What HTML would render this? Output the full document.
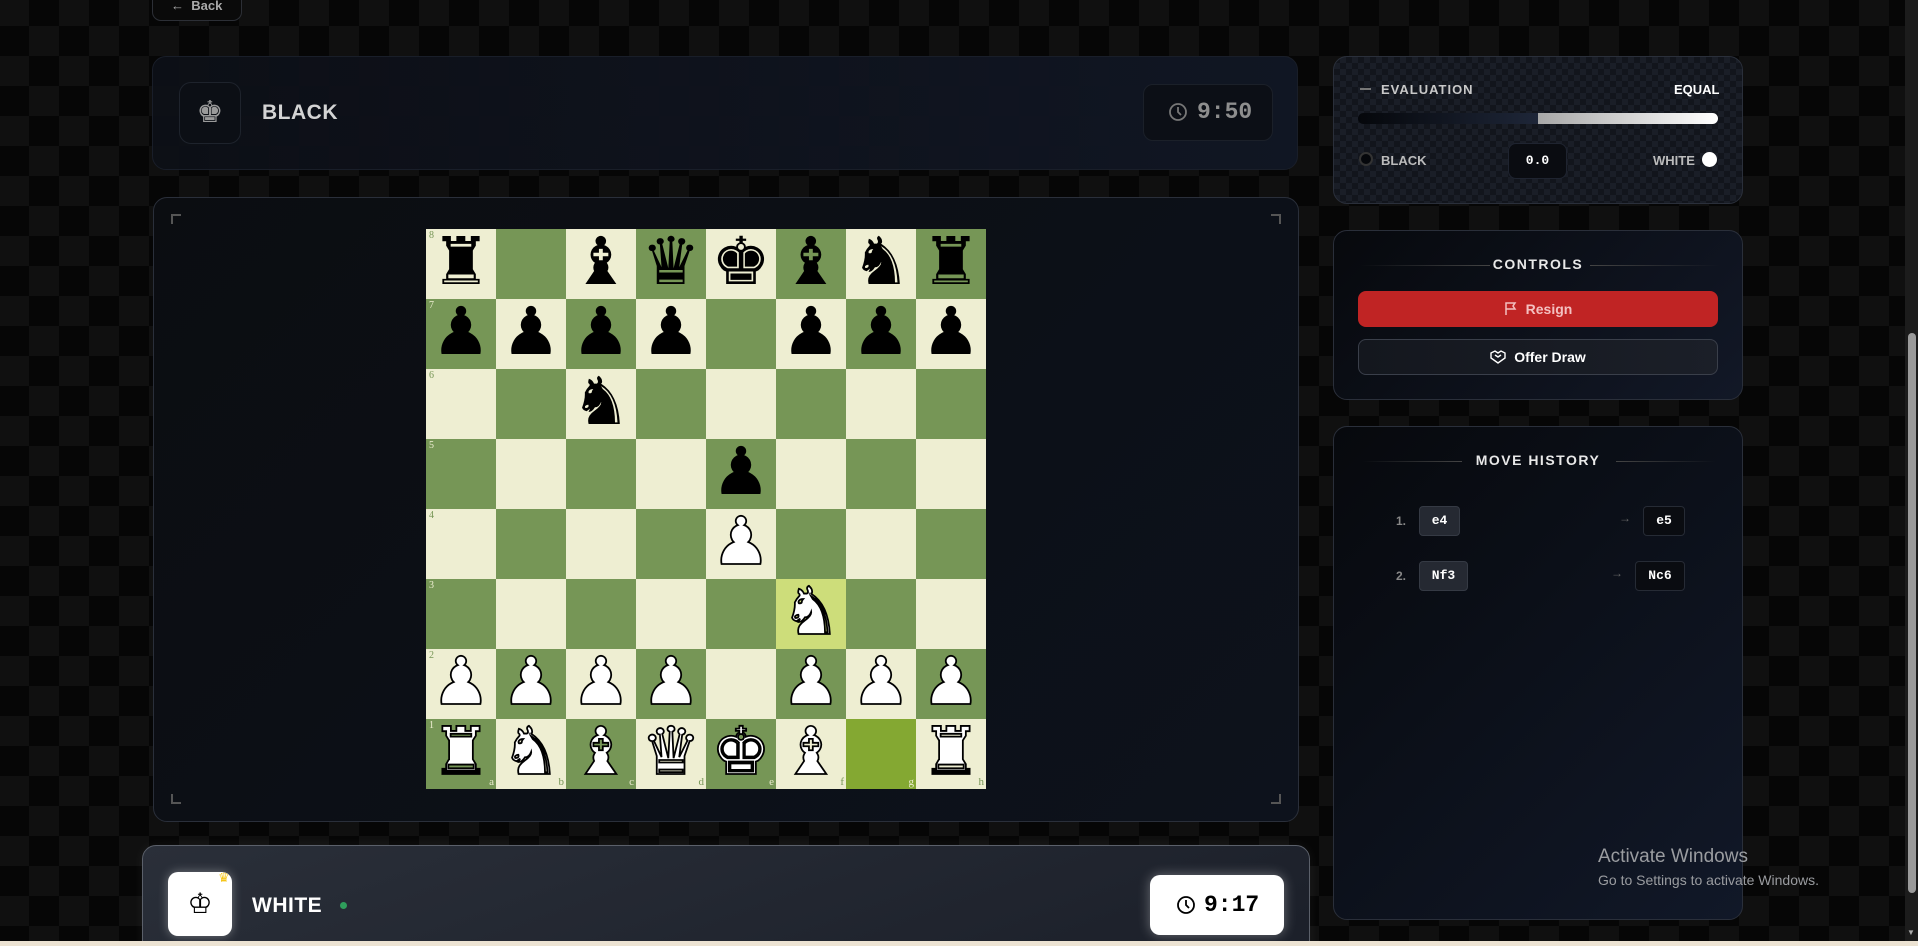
<!DOCTYPE html>
<html><head><meta charset="utf-8"><style>
*{box-sizing:border-box;margin:0;padding:0}
html,body{width:1918px;height:946px;overflow:hidden}
body{position:relative;font-family:"Liberation Sans","DejaVu Sans",sans-serif;color:#e5e7eb;
background-color:#060606;
background-image:linear-gradient(45deg,#101010 25%,transparent 25%,transparent 75%,#101010 75%),linear-gradient(45deg,#101010 25%,transparent 25%,transparent 75%,#101010 75%);
background-size:60px 60px;background-position:29px -4px,59px 26px}
.abs{position:absolute}
.card{position:absolute;border-radius:14px}
.sq{position:absolute;width:70px;height:70px;font-family:"DejaVu Sans",sans-serif;font-size:66px;line-height:66px;text-align:center;overflow:hidden}
.l{background:#eeeed2}.d{background:#769656}
.b{color:#000}
.w{color:#fff;-webkit-text-stroke:1.8px #000}
.rk{position:absolute;left:3px;top:1px;font-size:10px;line-height:12px;font-family:"Liberation Serif",serif;-webkit-text-stroke:0}
.fl{position:absolute;right:2px;bottom:1px;font-size:11px;line-height:12px;font-family:"Liberation Serif",serif;-webkit-text-stroke:0}
.l .rk,.l .fl{color:#769656}.d .rk,.d .fl{color:#eeeed2}
.title{position:absolute;left:0;width:100%;text-align:center;font-weight:bold;font-size:14px;letter-spacing:1.5px;color:#e8e8e8}
.mv{position:absolute;height:30px;border-radius:4px;font-family:"Liberation Mono",monospace;font-weight:bold;font-size:13px;line-height:28px;text-align:center;color:#fff}
</style></head><body>

<div class="abs" style="left:152px;top:-12px;width:90px;height:33px;border:1px solid #2c2f36;border-radius:9px;background:#0a0a0a;font-size:13px;font-weight:bold;color:#aaa;padding:9px 0 0 18px">← &nbsp;Back</div>

<div class="card" style="left:152px;top:56px;width:1146px;height:114px;background:linear-gradient(90deg,#0d1017,#111724);border:1px solid #1a1f2a;opacity:.97"></div>
<div class="abs" style="left:179px;top:82px;width:62px;height:62px;border:1px solid #1e232c;border-radius:12px;background:#0c0f15;text-align:center;font-family:'DejaVu Sans';font-size:30px;line-height:60px;color:#9a9a9a">♚</div>
<div class="abs" style="left:262px;top:101px;font-size:21px;font-weight:bold;color:#d4d4d4;letter-spacing:.5px">BLACK</div>
<div class="abs" style="left:1143px;top:84px;width:130px;height:57px;border:1px solid #1b2029;border-radius:10px;background:#0c0f16"></div>
<svg class="abs" style="left:1168px;top:102px" width="20" height="20" viewBox="0 0 20 20"><circle cx="10" cy="10" r="8" fill="none" stroke="#777" stroke-width="1.8"/><path d="M10 5v5l3 3" fill="none" stroke="#777" stroke-width="1.8"/></svg>
<div class="abs" style="left:1197px;top:99px;font-family:'Liberation Mono',monospace;font-weight:bold;font-size:23px;color:#8e8e8e">9:50</div>

<div class="card" style="left:153px;top:197px;width:1146px;height:625px;background:linear-gradient(135deg,#0b0d11,#0d121c);border:1px solid #2a2f3a"></div>
<div class="abs" style="left:171px;top:214px;width:10px;height:10px;border-left:2px solid #555;border-top:2px solid #555"></div>
<div class="abs" style="left:1271px;top:214px;width:10px;height:10px;border-right:2px solid #555;border-top:2px solid #555"></div>
<div class="abs" style="left:171px;top:794px;width:10px;height:10px;border-left:2px solid #555;border-bottom:2px solid #555"></div>
<div class="abs" style="left:1271px;top:794px;width:10px;height:10px;border-right:2px solid #555;border-bottom:2px solid #555"></div>

<div class="abs" style="left:426px;top:229px;width:560px;height:560px">
<div class="sq l b" style="left:0;top:0"><span class="rk">8</span>♜</div>
<div class="sq d" style="left:70px;top:0"></div>
<div class="sq l b" style="left:140px;top:0">♝</div>
<div class="sq d b" style="left:210px;top:0">♛</div>
<div class="sq l b" style="left:280px;top:0">♚</div>
<div class="sq d b" style="left:350px;top:0">♝</div>
<div class="sq l b" style="left:420px;top:0">♞</div>
<div class="sq d b" style="left:490px;top:0">♜</div>
<div class="sq d b" style="left:0;top:70px"><span class="rk">7</span>♟</div>
<div class="sq l b" style="left:70px;top:70px">♟</div>
<div class="sq d b" style="left:140px;top:70px">♟</div>
<div class="sq l b" style="left:210px;top:70px">♟</div>
<div class="sq d" style="left:280px;top:70px"></div>
<div class="sq l b" style="left:350px;top:70px">♟</div>
<div class="sq d b" style="left:420px;top:70px">♟</div>
<div class="sq l b" style="left:490px;top:70px">♟</div>
<div class="sq l" style="left:0;top:140px"><span class="rk">6</span></div>
<div class="sq d" style="left:70px;top:140px"></div>
<div class="sq l b" style="left:140px;top:140px">♞</div>
<div class="sq d" style="left:210px;top:140px"></div>
<div class="sq l" style="left:280px;top:140px"></div>
<div class="sq d" style="left:350px;top:140px"></div>
<div class="sq l" style="left:420px;top:140px"></div>
<div class="sq d" style="left:490px;top:140px"></div>
<div class="sq d" style="left:0;top:210px"><span class="rk">5</span></div>
<div class="sq l" style="left:70px;top:210px"></div>
<div class="sq d" style="left:140px;top:210px"></div>
<div class="sq l" style="left:210px;top:210px"></div>
<div class="sq d b" style="left:280px;top:210px">♟</div>
<div class="sq l" style="left:350px;top:210px"></div>
<div class="sq d" style="left:420px;top:210px"></div>
<div class="sq l" style="left:490px;top:210px"></div>
<div class="sq l" style="left:0;top:280px"><span class="rk">4</span></div>
<div class="sq d" style="left:70px;top:280px"></div>
<div class="sq l" style="left:140px;top:280px"></div>
<div class="sq d" style="left:210px;top:280px"></div>
<div class="sq l w" style="left:280px;top:280px">♟</div>
<div class="sq d" style="left:350px;top:280px"></div>
<div class="sq l" style="left:420px;top:280px"></div>
<div class="sq d" style="left:490px;top:280px"></div>
<div class="sq d" style="left:0;top:350px"><span class="rk">3</span></div>
<div class="sq l" style="left:70px;top:350px"></div>
<div class="sq d" style="left:140px;top:350px"></div>
<div class="sq l" style="left:210px;top:350px"></div>
<div class="sq d" style="left:280px;top:350px"></div>
<div class="sq w" style="left:350px;top:350px;background:#cddd7a">♞</div>
<div class="sq d" style="left:420px;top:350px"></div>
<div class="sq l" style="left:490px;top:350px"></div>
<div class="sq l w" style="left:0;top:420px"><span class="rk">2</span>♟</div>
<div class="sq d w" style="left:70px;top:420px">♟</div>
<div class="sq l w" style="left:140px;top:420px">♟</div>
<div class="sq d w" style="left:210px;top:420px">♟</div>
<div class="sq l" style="left:280px;top:420px"></div>
<div class="sq d w" style="left:350px;top:420px">♟</div>
<div class="sq l w" style="left:420px;top:420px">♟</div>
<div class="sq d w" style="left:490px;top:420px">♟</div>
<div class="sq d w" style="left:0;top:490px"><span class="rk">1</span>♜<span class="fl">a</span></div>
<div class="sq l w" style="left:70px;top:490px">♞<span class="fl">b</span></div>
<div class="sq d w" style="left:140px;top:490px">♝<span class="fl">c</span></div>
<div class="sq l w" style="left:210px;top:490px">♛<span class="fl">d</span></div>
<div class="sq d w" style="left:280px;top:490px">♚<span class="fl">e</span></div>
<div class="sq l w" style="left:350px;top:490px">♝<span class="fl">f</span></div>
<div class="sq" style="left:420px;top:490px;background:#84a832"><span class="fl" style="color:#eeeed2">g</span></div>
<div class="sq l w" style="left:490px;top:490px">♜<span class="fl">h</span></div>
</div>

<div class="card" style="left:142px;top:845px;width:1168px;height:120px;background:linear-gradient(160deg,#2a2f39,#1b1f29);border:1px solid #5b606a;box-shadow:0 0 12px rgba(255,255,255,.06)"></div>
<div class="abs" style="left:168px;top:872px;width:64px;height:64px;border-radius:10px;background:#fff;box-shadow:0 0 10px rgba(255,255,255,.35);text-align:center;font-family:'DejaVu Sans';font-size:28px;line-height:64px;color:#000">♔</div>
<div class="abs" style="left:218px;top:870px;font-size:13px;color:#f5c518">♛</div>
<div class="abs" style="left:252px;top:894px;font-size:21px;font-weight:bold;color:#fff;letter-spacing:.5px">WHITE</div>
<div class="abs" style="left:340px;top:902px;width:7px;height:7px;border-radius:50%;background:#2f9e5c"></div>
<div class="abs" style="left:1150px;top:875px;width:134px;height:60px;border-radius:10px;background:#fff;box-shadow:0 0 12px rgba(255,255,255,.35)"></div>
<svg class="abs" style="left:1176px;top:895px" width="20" height="20" viewBox="0 0 20 20"><circle cx="10" cy="10" r="8" fill="none" stroke="#000" stroke-width="1.8"/><path d="M10 5v5l3 3" fill="none" stroke="#000" stroke-width="1.8"/></svg>
<div class="abs" style="left:1204px;top:892px;font-family:'Liberation Mono',monospace;font-weight:bold;font-size:23px;color:#000">9:17</div>

<div class="card" style="left:1333px;top:56px;width:410px;height:148px;border:1px solid #2a2f3a;background-color:#12151c;background-image:linear-gradient(45deg,#1a1e27 25%,transparent 25%,transparent 75%,#1a1e27 75%),linear-gradient(45deg,#1a1e27 25%,transparent 25%,transparent 75%,#1a1e27 75%);background-size:12px 12px;background-position:0 0,6px 6px"></div>
<div class="abs" style="left:1360px;top:88px;width:11px;height:2px;background:#777"></div>
<div class="abs" style="left:1381px;top:82px;font-size:13px;font-weight:bold;color:#c8c8c8;letter-spacing:1px">EVALUATION</div>
<div class="abs" style="left:1674px;top:82px;font-size:13px;font-weight:bold;color:#fff">EQUAL</div>
<div class="abs" style="left:1358px;top:113px;width:360px;height:11px;border-radius:6px;background:linear-gradient(90deg,#05070b,#1e2638 50%,#a8a8a8 50%,#fff)"></div>
<div class="abs" style="left:1359px;top:152px;width:14px;height:14px;border-radius:50%;border:2px solid #333;background:#05070b"></div>
<div class="abs" style="left:1381px;top:153px;font-size:13px;font-weight:bold;color:#bbb">BLACK</div>
<div class="abs" style="left:1508px;top:143px;width:59px;height:36px;border-radius:8px;background:#0a0c11;border:1px solid #1f2430;text-align:center;font-family:'Liberation Mono',monospace;font-weight:bold;font-size:13px;line-height:34px;color:#fff">0.0</div>
<div class="abs" style="left:1653px;top:153px;font-size:13px;font-weight:bold;color:#bbb">WHITE</div>
<div class="abs" style="left:1702px;top:152px;width:15px;height:15px;border-radius:50%;background:#fff"></div>

<div class="card" style="left:1333px;top:230px;width:410px;height:170px;border:1px solid #2a2f3a;background:linear-gradient(135deg,#07090d,#121827)"></div>
<div class="abs" style="left:1360px;top:265px;width:130px;height:1px;background:linear-gradient(90deg,transparent,#444)"></div>
<div class="abs" style="left:1590px;top:265px;width:130px;height:1px;background:linear-gradient(90deg,#444,transparent)"></div>
<div class="title" style="left:1333px;width:410px;top:256px">CONTROLS</div>
<div class="abs" style="left:1358px;top:291px;width:360px;height:36px;border-radius:8px;background:#c02424;text-align:center;font-size:14px;font-weight:bold;line-height:36px;color:#f3c0c0">
<svg width="14" height="15" viewBox="0 0 14 15" style="vertical-align:-2px;margin-right:8px"><path d="M2 14V2h9l-2 3 2 3H2" fill="none" stroke="#f3c0c0" stroke-width="1.5"/></svg>Resign</div>
<div class="abs" style="left:1358px;top:339px;width:360px;height:36px;border-radius:8px;background:linear-gradient(90deg,#14171e,#1b1f28);border:1px solid #3a3f4a;text-align:center;font-size:14px;font-weight:bold;line-height:34px;color:#fff">
<svg width="16" height="14" viewBox="0 0 16 14" style="vertical-align:-2px;margin-right:8px"><path d="M1 3l4-2 3 2 3-2 4 2v5l-7 5-7-5z M5 5l3 2 3-2" fill="none" stroke="#fff" stroke-width="1.4"/></svg>Offer Draw</div>

<div class="card" style="left:1333px;top:426px;width:410px;height:494px;border:1px solid #2a2f3a;background:linear-gradient(135deg,#07090d,#111828)"></div>
<div class="abs" style="left:1362px;top:461px;width:100px;height:1px;background:linear-gradient(90deg,transparent,#444)"></div>
<div class="abs" style="left:1616px;top:461px;width:100px;height:1px;background:linear-gradient(90deg,#444,transparent)"></div>
<div class="title" style="left:1333px;width:410px;top:452px">MOVE HISTORY</div>
<div class="abs" style="left:1396px;top:514px;font-size:12px;font-weight:bold;color:#888">1.</div>
<div class="mv" style="left:1419px;top:506px;width:41px;background:#252932;border:1px solid #353a44">e4</div>
<div class="abs" style="left:1619px;top:511px;font-size:12px;color:#666">→</div>
<div class="mv" style="left:1643px;top:506px;width:42px;background:#0a0c11;border:1px solid #262b35">e5</div>
<div class="abs" style="left:1396px;top:569px;font-size:12px;font-weight:bold;color:#888">2.</div>
<div class="mv" style="left:1419px;top:561px;width:49px;background:#252932;border:1px solid #353a44">Nf3</div>
<div class="abs" style="left:1611px;top:566px;font-size:12px;color:#666">→</div>
<div class="mv" style="left:1635px;top:561px;width:50px;background:#0a0c11;border:1px solid #262b35">Nc6</div>

<div class="abs" style="left:1598px;top:846px;font-size:19px;color:#9a9ca0">Activate Windows</div>
<div class="abs" style="left:1598px;top:872px;font-size:14px;color:#9a9ca0">Go to Settings to activate Windows.</div>

<div class="abs" style="left:1905px;top:0;width:13px;height:941px;background:#1c1c1c"></div>
<div class="abs" style="left:1908px;top:333px;width:8px;height:560px;border-radius:4px;background:#9a9a9a"></div>
<div class="abs" style="left:1907px;top:928px;font-size:8px;color:#aaa">▼</div>

<div class="abs" style="left:0;top:941px;width:1918px;height:5px;background:#ece3d3"></div>
</body></html>
